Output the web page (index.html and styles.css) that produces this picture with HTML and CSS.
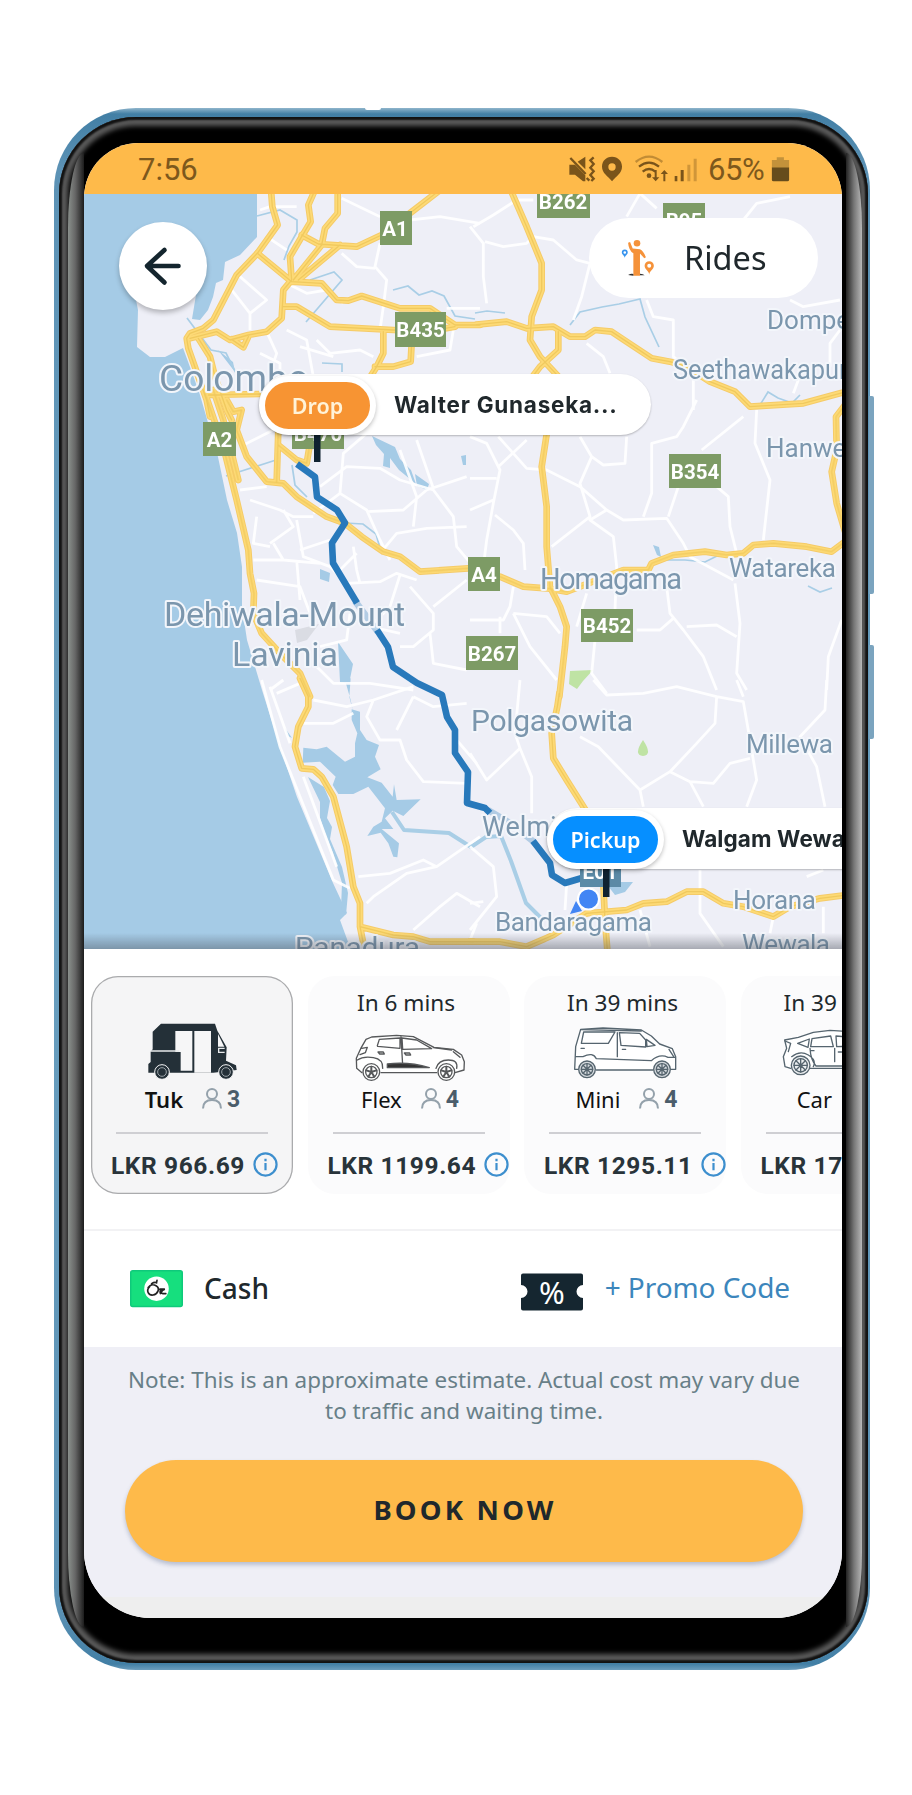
FILE: index.html
```html
<!DOCTYPE html>
<html lang="en">
<head>
<meta charset="utf-8">
<title>Rides</title>
<link rel="stylesheet" href="styles.css">
</head>
<body>
<div class="phone">
  <span class="side-key volume"></span>
  <span class="side-key power"></span>
  <span class="notch"></span>
  <div class="rim">
    <span class="shine shine-left"></span>
    <span class="shine shine-right"></span>
    <main class="screen">
      <header class="status">
        <span class="clock">7:56</span>
        <svg class="status-icons" viewBox="290 190 395 90">
          <g fill="#7a541a">
            <path d="M297 222H314L345 254V272H338L314 252H297zM322 213L345 198V236z"/>
            <path d="M425 198c-18 0-30 13-30 30 0 20 18 28 30 44 12-16 30-24 30-44 0-17-12-30-30-30zm0 20a11 11 0 1 1 0 22 11 11 0 0 1 0-22z" fill-rule="evenodd"/>
            <circle cx="536" cy="255" r="7"/>
            <path d="M553 238h6v22h8l-11 12-11-12h8zM579 272h6v-22h8l-11-12-11 12h8z"/>
            <path d="M613 256h8v16h-8zM631 238h9v34h-9z"/>
            <path d="M651 222h9v50h-9zM670 204h9v68h-9z" opacity=".35"/>
          </g>
          <g fill="none" stroke="#7a541a" stroke-width="7">
            <path d="M300 202L346 250"/>
            <path d="M370 200l-10 9 10 11-10 11 10 11-10 11 10 11-7 7M349 262l8 8"/>
            <path d="M506 228q30-24 60 0M517 243q19-16 38 0"/>
            <path d="M496 214q40-32 80 0" opacity=".45"/>
          </g>
        </svg>
        <span class="charge">65%</span>
        <svg class="battery" viewBox="900 195 60 80">
          <path d="M905 232v-25h15v-8h22v8h16v25z" fill="#c3923b"/>
          <path d="M905 230h53v38q0 5-5 5h-43q-5 0-5-5z" fill="#664c1c"/>
        </svg>
      </header>

      <section class="map">
        <svg class="map-canvas" viewBox="84 194 758 755">
          <defs>
            <g id="majors">
              <g transform="translate(40 90) scale(.33333)">
                <path d="M693 300L697 350 713 405 652 490 590 555 520 690 490 715 450 730 440 745 445 775 475 860 500 930 510 980"/>
                <path d="M450 745L530 725 570 750 625 735 680 725 725 685 730 600 755 570M575 748L610 772 625 740M652 490L755 575M825 300L805 345 812 395 785 440 750 500 755 570M893 300V370L855 415 845 465 760 570M785 435L835 462 950 470 1025 435 1200 300M900 465L775 570M755 575L845 580 890 630 925 632 965 618 1080 655 1170 655 1245 705 1320 705"/>
                <path d="M730 650L770 650 870 710 1060 720 1160 725 1245 710M1030 725V790L1010 830 985 870M1005 830L1060 830 1112 815 1115 760M475 745L510 800 525 860 560 960 575 990M505 915L660 912"/>
              </g>
              <g transform="translate(470 90) scale(.33333)">
                <path d="M20 704L110 695 170 715 250 710 300 740 345 740 375 720 425 725 470 755 545 805 600 815 650 830 720 875 795 905 840 950 1000 940 1110 910 1130 905"/>
                <path d="M122 300L170 410 215 520 215 600 185 680 180 750 210 800 275 870M265 725V780L210 830 180 870"/>
              </g>
              <g transform="translate(80 400) scale(.33333)">
                <path d="M375 -20L430 140 470 300 505 450 510 520 522 580 520 640 545 700 600 760 660 820 690 890M400 -30L430 60 475 240"/>
                <path d="M440 0L460 35 485 30 470 90 500 170 560 245 610 250 650 290 740 350 795 370 845 410 910 455 960 470 1020 515 1165 505M595 90L590 245M595 135L650 180 680 190 690 130"/>
              </g>
              <g transform="translate(470 400) scale(.33333)">
                <path d="M232 90L215 200 230 320 230 440 240 560 270 620 290 680 285 740 268 890"/>
                <path d="M90 530L160 560 230 565 290 575 460 510 535 510 545 490 610 465 705 455 770 465 820 460 850 435 910 430 1010 440 1085 455 1125 425M1125 15L1098 50 1100 150 1085 215 1100 310 1125 395"/>
              </g>
              <g transform="translate(80 680) scale(.33333)">
                <path d="M660 -5L685 50 685 80 655 140 645 200 665 265 700 268 725 290 760 350 800 500 820 620 840 670 840 740 850 790M840 740L940 765 1000 770 1050 785 1180 785"/>
              </g>
              <g transform="translate(470 680) scale(.33333)">
                <path d="M268 40L262 80 245 160 250 235 290 300 350 395M0 785L90 785 170 800 250 765 350 700 470 690 520 670 590 665 650 635 700 635 760 670 820 680 910 710 960 680 1050 655 1130 645M400 610L405 720 412 810"/>
              </g>
            </g>
          </defs>

          <rect x="84" y="193" width="758" height="757" fill="#eeeff7"/>
          <path class="water" d="M84 193H257V237L240 255 225 262 223 280 216 283 213 297 208 310 200 320 192 319 196 295 135 295 138 310 137 347 150 357 165 357 183 348 190 367 200 395 218 457 227 500 237 533 242 567V607L247 640 262 690 280 747 297 797 333 883 347 913 340 920 351 950H84Z"/>

          <!-- lakes and lagoons -->
          <g class="water">
            <path transform="translate(80 680) scale(.33333)" d="M815 88L840 95V150L860 180 897 195 885 230 902 268 862 292 905 308 938 350 942 313 950 360 1022 358 970 408 938 392 915 415 940 447 905 447 957 490 952 532 940 530 925 490 902 458 862 468 880 440 905 425 915 385 865 320 820 342 775 342 758 315 767 290 720 245 668 248 670 203 710 208 740 200 795 245 825 230V190L832 160 815 120ZM795 0L812 -5 808 50 818 90 812 60Z"/>
            <path d="M308 777l16 10 6 14-3 17 5 9-2 12 12 28 6 26-2 22-5-6 1-26-9-30-8-20-5-15 0-16zM338 642l15 22-4 20-9-2zM372 436l23 11 5 12 11 11 5 14-17-14-9-12 0 10-7-2 1-12-8-9zM415 474l14 10-2 6-10-4zM320 569l10 4-1 9-9-3zM218 350l15 12 2 10zM605 882h28l-8 10-10 3zM285 728l7 10-4-2zM461 456l5-1 0 10-3 0zM653 545l6 2 2 10-4-2z"/>
          </g>
          <g class="stream">
            <path d="M257 216l23-6 17 10 0 12-8 14-5 14M393 290l15-4 11 9 13-4 12 5 11 20 20 3M570 325l10-13 22-5 17-3 21-5 5 18 14 30M475 313l12-2 18 2M310 280l24-8 8 8-12 14-24 28M187 318l24 32 15 3 10 20M322 363l20 1 0 8M292 465l3 20 12 12M345 523l18 1 13 10 4 14M760 405l8-13 10 6 14 5 8-8M665 560l20 0 20 2 16-8M808 586l12 6 12-4M226 476l50-16"/>
          </g>
          <path class="river" d="M392 812l12 18 45 3 22 14 15-10 15-1 10 25 15 42 15 15"/>
          <path d="M570 671l23-1-10 11-6 8-8-5zM643 740q10 15 0 16-10-1 0-16z" fill="#bfe3a4"/>
          <path d="M295 630l24-6-12 16-10 3z" fill="#dadce3"/>

          <!-- minor roads -->
          <g class="minor">
            <g transform="translate(40 90) scale(.33333)">
              <path d="M660 360L690 350 770 350M905 325L1020 380M1110 390L1200 380 1320 400M1020 460L1005 530 1040 570 1030 650 1020 720M905 490L950 530 1005 535M1220 655H1320M600 560L680 630 630 670 575 600M630 665V720M680 440L740 480M740 580L800 610 860 600 910 640M740 720L800 750 820 860M830 750L870 790 960 780 1000 800M680 725L710 790 690 850M1130 800L1230 780 1240 720M780 770L880 800M660 790L720 820 720 880"/>
            </g>
            <g transform="translate(470 90) scale(.33333)">
              <path d="M10 410L70 375 140 330 190 330M0 410L40 460 40 560 50 640M45 455L100 470 170 460 190 440 250 450 320 510 360 520 335 620 310 690M470 380L510 310 560 355M820 390L860 340 960 320M350 760L400 800 420 850M530 630L550 680 610 690 610 800 670 850 670 960M960 630L1000 650 1110 630M1110 720L1080 760 1080 830M1000 830L970 910"/>
            </g>
            <g transform="translate(80 400) scale(.33333)">
              <path d="M480 140L580 90M860 100L790 160 780 280 700 340M720 260L800 200 900 205 960 240 1060 270 1120 350 1130 440 1180 500M780 280L860 330 900 420 930 480M860 335L970 330 1040 270 1160 230M900 460L950 400 1040 385 1160 380M960 150L1010 290 1000 380M1010 120L1060 265M480 270L560 260M510 300L600 330 640 350 700 350M530 350L520 430 570 440M610 330L640 380 570 430M580 430L610 480M650 360L670 470 750 500 800 550M660 450L750 420M520 480L610 480 720 490M820 440L830 510 840 550M830 460L780 510M530 540L660 560 690 640M650 480L660 600M800 550L900 545 950 520 1010 540M960 525L930 620 870 680 960 700M990 560L1060 640 1060 690 1000 740 960 740M1060 620L1160 540M1050 700L1060 790 1160 810M720 740L800 720 810 640M610 840L570 870M700 790L760 850 870 850 1000 870"/>
            </g>
            <g transform="translate(470 400) scale(.33333)">
              <path d="M0 110L50 130 90 210 70 310 50 420 40 500M0 235L80 235M85 110L170 205 230 210 330 260 410 330 460 360 590 355 640 430 660 470 790 540M170 120L85 200M0 330L70 300M75 345L130 390 160 430 165 510M330 110L365 170 330 250 360 350 245 440M365 170L400 195 465 190 470 110M410 330L360 360 430 410 440 500 435 630M680 0L640 80 620 110 545 130 545 280 520 350M820 50L695 150M625 260L595 350M860 30L855 130 900 240 880 420M740 260L775 290 780 380 800 460M590 560L600 640 640 690 700 770 740 870M650 680L740 675 800 710M795 550L810 670 800 820 830 870M500 690L570 690 610 655M350 580L320 680M375 720L365 820 410 880M0 660L100 660 120 620 130 560M130 640L180 740 260 840M130 640L230 650 270 700M90 700V650M1115 660L1075 770 1070 870"/>
            </g>
            <g transform="translate(80 680) scale(.33333)">
              <path d="M545 0L600 200 640 300 760 600 810 625M570 20L630 190M670 290L770 560M590 40L660 10M700 60L800 80 880 60 1000 20M670 130L760 130 820 100M880 60L860 110 900 180 960 180 980 240 1030 305 1160 310M1000 50L950 150M1000 50L1060 80 1160 70M835 590L930 580 1030 540 1070 560 980 580 880 650 860 670M1070 560L1200 470M1000 750L1080 680 1130 640 1200 680M1190 730L1170 780M1130 180L1190 250"/>
            </g>
            <g transform="translate(470 680) scale(.33333)">
              <path d="M0 220L50 300 150 205 185 290 185 400M150 0L135 160 150 205M370 0L410 45 520 40 620 20 740 50 820 65 840 180 860 300 830 380M740 50L735 130 680 190 600 275 510 330 385 200 330 170M510 330L520 380M600 275L660 305 700 380M660 305L730 310 780 250 840 235M800 0L820 50M1070 0L1065 90 990 170 1040 260 1065 380M0 500L70 560 80 650 0 750M290 610L285 690M690 570L690 700 760 800M1010 590L1060 570M910 710L900 760M1060 680L1060 760M510 690L540 800M0 670L40 665"/>
            </g>
          </g>

          <use href="#majors" class="major casing"/>
          <use href="#majors" class="major core"/>
          <use href="#majors" class="major center"/>

          <path class="route faded" d="M355 601L378 632M488 810L510 823 534 842"/>
          <path class="route" d="M297 464L315 477 317 497 337 510 345 523 332 543 333 563 357 603M377 630L388 647 393 667 417 683 442 695 447 717 455 730V753L468 772 467 803 485 808 490 813M533 841L550 863 552 875 565 883 582 878"/>

          <g class="place">
            <text x="159" y="391" font-size="36" textLength="150" lengthAdjust="spacingAndGlyphs">Colombo</text>
            <text x="164" y="626" font-size="34" textLength="241">Dehiwala-Mount</text>
            <text x="232" y="666" font-size="34" textLength="106">Lavinia</text>
            <text x="540" y="589" font-size="29" textLength="142">Homagama</text>
            <text x="729" y="577" font-size="26" textLength="107">Watareka</text>
            <text x="471" y="731" font-size="30" textLength="162">Polgasowita</text>
            <text x="746" y="753" font-size="26" textLength="87">Millewa</text>
            <text x="482" y="836" font-size="27">Welmilla</text>
            <text x="495" y="931" font-size="26" textLength="157">Bandaragama</text>
            <text x="733" y="909" font-size="26" textLength="83">Horana</text>
            <text x="742" y="953" font-size="26" textLength="88">Wewala</text>
            <text x="295" y="957" font-size="28" textLength="125" lengthAdjust="spacingAndGlyphs">Panadura</text>
            <text x="767" y="329" font-size="26">Dompe</text>
            <text x="673" y="379" font-size="27" textLength="188" lengthAdjust="spacingAndGlyphs">Seethawakapura</text>
            <text x="766" y="457" font-size="26">Hanwella</text>
          </g>

          <g class="shield">
            <path d="M380 211h32v34h-32zM537 187h53v31h-53zM663 203h42v34h-42zM395 312h51v35h-51zM203 422h33v34h-33zM292 414h52v35h-52zM669 454h52v34h-52zM468 557h32v34h-32zM581 609h52v33h-52zM466 636h52v34h-52z"/>
            <path d="M580 860h41v27h-41z" fill="#5b8aa6"/>
            <g class="shield-text">
              <text x="395" y="236">A1</text><text x="563" y="209">B262</text><text x="684" y="228">B95</text>
              <text x="420.500" y="337">B435</text><text x="219.500" y="447">A2</text><text x="318" y="441">B470</text>
              <text x="695" y="479">B354</text><text x="484" y="582">A4</text><text x="607" y="633">B452</text>
              <text x="492" y="661">B267</text><text x="600" y="879">E01</text>
            </g>
          </g>
          <path d="M576 901l-6 13 12-3z" fill="#4285f4"/>
          <circle cx="588.500" cy="899" r="10.500" fill="#4285f4" stroke="#fff" stroke-width="2"/>
          <path d="M314 434h6.500v28h-6.500zM603 866h6.500v31h-6.500z" fill="#0f2230"/>
        </svg>

        <button class="back" aria-label="Back">
          <svg viewBox="0 0 88 88"><path d="M59.500 44H28M45.500 28L28 44l17.500 16.500" fill="none" stroke="#14252e" stroke-width="4.600" stroke-linecap="round" stroke-linejoin="round"/></svg>
        </button>

        <div class="rides">
          <svg viewBox="450 445 105 115">
            <g fill="#f5923a"><circle cx="501" cy="458" r="10"/><path d="M474 456l6-2 8 20 22 2q10 4 18 24l-5 3-13-14v67h-20v-68q-14-8-16-32z"/>
            <path d="M538 512a14 14 0 0 0-14 14c0 12 14 16 14 27 0-11 14-15 14-27a14 14 0 0 0-14-14zm0 8a6 6 0 1 1 0 12 6 6 0 0 1 0-12z" fill-rule="evenodd"/></g>
            <path d="M464 477a9 9 0 0 0-9 9c0 7 9 9 9 17 0-8 9-10 9-17a9 9 0 0 0-9-9zm0 5a4 4 0 1 1 0 8 4 4 0 0 1 0-8z" fill="#3693ee" fill-rule="evenodd"/>
            <path d="M474 554q10-6 16-3v5zM510 550q10 0 14 5h-14z" fill="#333"/>
          </svg>
          <span>Rides</span>
        </div>

        <div class="stop stop-drop"><b class="badge badge-drop">Drop</b><span class="stop-name">Walter Gunaseka...</span></div>
        <div class="stop stop-pickup"><b class="badge badge-pickup">Pickup</b><span class="stop-name">Walgam Wewa</span></div>
        <span class="map-fade"></span>
      </section>

      <svg width="0" height="0" class="symbols">
        <symbol id="person" viewBox="0 0 20 21"><circle cx="10" cy="6" r="5"/><path d="M1 20.500q0-8.500 9-8.500t9 8.500"/></symbol>
        <symbol id="info" viewBox="0 0 26 26"><circle cx="13" cy="13" r="11.500"/><path d="M13 11.500v7.500M13 7v2.500"/></symbol>
      </svg>

      <section class="vehicles">
        <article class="card selected">
          <span class="eta"></span>
          <svg class="vehicle" viewBox="156 180 360 186">
            <path d="M243 191H405L412 212 440 262 438 302 468 316 470 330 400 338H205V312L212 306V275L218 268V215Z" fill="#243038"/>
            <path d="M286 213H337V332H302V276H286zM343 213H393V338H343z" fill="#f6f6f7"/>
            <path d="M414 222L433 260H414z" fill="#f6f6f7"/>
            <path d="M212 273h86M434 265h-18v12h18" fill="none" stroke="#e8eaec" stroke-width="4"/>
            <g fill="#243038" stroke="#f6f6f7" stroke-width="3"><circle cx="246" cy="336" r="22"/><circle cx="438" cy="336" r="22"/></g>
            <g fill="#243038" stroke="#9da5aa" stroke-width="3"><circle cx="246" cy="336" r="13"/><circle cx="438" cy="336" r="13"/></g>
          </svg>
          <div class="kind"><span>Tuk</span><svg class="person"><use href="#person"/></svg><b>3</b></div>
          <hr>
          <div class="fare"><b>LKR 966.69</b><svg class="info"><use href="#info"/></svg></div>
        </article>

        <article class="card">
          <span class="eta">In 6 mins</span>
          <svg class="vehicle" viewBox="807 180 360 186">
            <g class="outline" stroke="#56585a">
              <path d="M846 338L830 325 829 295 842 266 858 238 875 231 950 226 1000 230 1062 262 1120 268 1145 285 1153 305 1152 330 1125 338M903 338H1070" fill="#fff"/>
              <path d="M892 257L898 238 960 234V265L893 259zM966 234L1010 240 1055 266 968 268zM963 230L968 315M845 265L862 262 856 278 840 284M1120 275L1140 292M1060 263L1115 270M832 300Q850 288 880 293T908 325M1068 325Q1075 300 1105 300T1130 325M894 276h16l3 6h-14zM973 279h16l3 6h-14z"/>
              <path d="M922 312Q985 304 1048 323H922z" fill="#333"/>
              <circle cx="874" cy="336" r="25" fill="#fff"/><circle cx="1099" cy="336" r="25" fill="#fff"/>
              <circle cx="874" cy="336" r="17"/><circle cx="1099" cy="336" r="17"/>
              <path d="M874 336V320M874 336L859 331M874 336L865 350M874 336L883 350M874 336L889 331M1099 336V320M1099 336L1084 331M1099 336L1090 350M1099 336L1108 350M1099 336L1114 331" stroke-width="6"/>
            </g>
          </svg>
          <div class="kind"><span>Flex</span><svg class="person"><use href="#person"/></svg><b>4</b></div>
          <hr>
          <div class="fare"><b>LKR 1199.64</b><svg class="info"><use href="#info"/></svg></div>
        </article>

        <article class="card">
          <span class="eta">In 39 mins</span>
          <svg class="vehicle" viewBox="286 180 360 186">
            <g class="outline" stroke="#56656f">
              <path d="M325 328H315L318 260 333 208 400 204 515 210 545 228 570 252 608 266 618 290V328H600M380 330H550" fill="#fff"/>
              <path d="M333 209L515 213M342 216H436L416 250H335zM449 218L510 220 528 240V261L454 256zM443 218V290M530 238L556 256 532 260zM598 268L612 290M318 290H340Q370 275 380 296L545 302Q570 280 595 292L617 292M334 265h10M458 268h10"/>
              <circle cx="352" cy="328" r="25" fill="#d4d9dd"/><circle cx="577" cy="328" r="25" fill="#d4d9dd"/>
              <circle cx="352" cy="328" r="17"/><circle cx="577" cy="328" r="17"/>
              <path d="M352 311V345M335 328H369M340 316L364 340M340 340L364 316M577 311V345M560 328H594M565 316L589 340M565 340L589 316"/>
            </g>
          </svg>
          <div class="kind"><span>Mini</span><svg class="person"><use href="#person"/></svg><b>4</b></div>
          <hr>
          <div class="fare"><b>LKR 1295.11</b><svg class="info"><use href="#info"/></svg></div>
        </article>

        <article class="card">
          <span class="eta">In 39 mins</span>
          <svg class="vehicle" viewBox="936 180 360 186">
            <g class="outline" stroke="#56656f">
              <path d="M962 325L945 320 940 290 950 265 944 240 985 232 1030 217 1080 211 1150 216 1220 250 1270 265 1285 290 1280 325H1020" fill="#fff"/>
              <path d="M983 250L1018 237 1014 262zM1026 236L1082 228 1090 260H1022zM1098 228L1150 232 1180 258 1100 260zM1094 265V305M1020 265Q1022 300 1038 318H1120M965 290Q990 270 1015 285T1030 320M945 243L962 250 955 275M1022 272h10M1105 276h10"/>
              <circle cx="992" cy="316" r="28" fill="#eceff1"/><circle cx="992" cy="316" r="20"/><path d="M992 296V336M972 316H1012M978 302L1006 330M978 330L1006 302"/>
              <circle cx="1225" cy="316" r="28" fill="#eceff1"/>
            </g>
          </svg>
          <div class="kind"><span>Car</span><svg class="person"><use href="#person"/></svg><b>4</b></div>
          <hr>
          <div class="fare"><b>LKR 1795.20</b><svg class="info"><use href="#info"/></svg></div>
        </article>
      </section>

      <section class="payment">
        <svg class="cash-icon" viewBox="0 0 54 38">
          <rect x=".75" y=".75" width="52.500" height="36.500" rx="2" fill="#16df7e" stroke="#0fc97b" stroke-width="1.500"/>
          <circle cx="27" cy="19" r="12.500" fill="#fff"/>
          <path d="M20 17q-3 3-1.500 6t5 2.500 5-4-2-5.500-6 0l-2 2M22 14q3-2 5-1l.5-2.500M30.500 19.500h5q-3 1-3.500 3t4.500 1.500M31 24q-1-3 1-4.500" fill="none" stroke="#222" stroke-width="1.700" stroke-linecap="round"/>
        </svg>
        <span class="method">Cash</span>
        <svg class="ticket" viewBox="0 0 62 38">
          <path d="M2 .5h58q2 0 2 2V12a6.500 6.500 0 0 0 0 13v10.500q0 2-2 2H2q-2 0-2-2V25a6.500 6.500 0 0 0 0-13V2.500q0-2 2-2z" fill="#152630"/>
          <text x="31" y="31">%</text>
        </svg>
        <span class="promo">+ Promo Code</span>
      </section>

      <footer class="checkout">
        <p class="note">Note: This is an approximate estimate. Actual cost may vary due<br>to traffic and waiting time.</p>
        <button class="book">BOOK NOW</button>
      </footer>
    </main>
  </div>
</div>
</body>
</html>
```
FILE: styles.css
```css
* { box-sizing: border-box; }
body { margin: 0; padding: 108px 0 0 54px; height: 1795px; overflow: hidden; background: #fff; font-family: "Noto Sans", "Open Sans", sans-serif; color: #20282c; }
button { border: 0; padding: 0; font: inherit; color: inherit; }
svg { display: block; }

.phone { position: relative; width: 816px; height: 1562px; padding: 9px 2px 7px 5px; border-radius: 82px; background: linear-gradient(180deg, #8fb5cc 0, #427fa5 6px, #5c92b5 60px, #6a9fbf 50%, #5c92b5 1500px, #427fa5 1556px, #6c9dbd 100%); }
.side-key { position: absolute; left: 815px; width: 5px; background: #7ba4bf; border-radius: 0 2px 2px 0; }
.volume { top: 288px; height: 198px; }
.power { top: 537px; height: 94px; }
.notch { position: absolute; left: 311px; top: 0; width: 16px; height: 2px; background: #fff; border-radius: 0 0 8px 8px; }
.rim { position: relative; width: 809px; height: 1546px; padding: 26px 26px 45px 25px; border-radius: 77px; background: #000; box-shadow: inset 0 0 2px 3px #111, inset 0 0 5px 9px #5c5c5c; }
.shine { position: absolute; top: 36px; bottom: 36px; width: 16px; }
.shine-left { left: 9px; background: linear-gradient(90deg, #8a908c, #666 45%, #1c1c1c); border-radius: 16px 0 0 16px / 75px 0 0 75px; }
.shine-right { right: 6px; background: linear-gradient(90deg, #222, #777 50%, #b8b8b8); border-radius: 0 16px 16px 0 / 0 75px 75px 0; }
.screen { position: relative; width: 758px; height: 1475px; overflow: hidden; border-radius: 55px 55px 67px 67px; background: #fff; }

.status { display: flex; align-items: center; height: 51px; padding: 0 52px 0 54px; background: #feba4a; font-family: Roboto, sans-serif; font-size: 31px; color: #7d581c; }
.clock { flex: 1; padding-top: 2px; }
.status-icons { width: 131.7px; height: 30px; margin-right: 9px; }
.charge { padding-top: 2px; width: 62px; letter-spacing: -.4px; }
.battery { width: 20px; height: 26px; }

.map { position: relative; height: 755px; overflow: hidden; }
.map-canvas { width: 758px; height: 755px; }
.water { fill: #a5cbe6; }
.stream { fill: none; stroke: #a9cee6; stroke-width: 1.7; }
.river { fill: none; stroke: #a9cee6; stroke-width: 4; stroke-linejoin: round; }
.minor { fill: none; stroke: #fff; stroke-width: 8.5; stroke-linejoin: round; opacity: .9; }
.major { fill: none; stroke-linejoin: round; stroke-linecap: round; }
.casing { stroke: #f5cb68; stroke-width: 20; }
.core { stroke: #fdda76; stroke-width: 14; }
.center { stroke: #f0c95e; stroke-width: 4; }
.route { fill: none; stroke: #2879bb; stroke-width: 6.6; stroke-linejoin: round; }
.faded { opacity: .3; }
.place { font-family: Roboto, sans-serif; fill: #7b96ad; stroke: #f3f6fb; stroke-width: 4; stroke-linejoin: round; paint-order: stroke; }
.shield { fill: #7d9b65; }
.shield-text { fill: #fff; font: 700 20.5px Roboto, sans-serif; text-anchor: middle; }
.map-fade { position: absolute; left: 0; right: 0; bottom: 0; height: 16px; background: linear-gradient(rgba(70,75,85,0), rgba(70,75,85,.42)); }

.back { position: absolute; left: 35px; top: 28px; width: 88px; height: 88px; border-radius: 50%; background: #fff; box-shadow: 0 3px 5px rgba(0,0,0,.25); }
.rides { position: absolute; left: 505px; top: 24px; display: flex; align-items: center; width: 229px; height: 80px; padding-left: 31px; border-radius: 40px; background: #fff; font-size: 32.5px; }
.rides svg { width: 35px; height: 38px; margin-right: 29px; }
.rides span { padding-bottom: 1px; }
.stop { position: absolute; display: flex; align-items: center; height: 61px; border-radius: 31px; background: #fff; box-shadow: 0 1px 2px rgba(0,0,0,.25); }
.stop-drop { left: 175px; top: 180px; width: 392px; }
.stop-pickup { left: 463px; top: 614px; width: 420px; }
.badge { display: flex; align-items: center; justify-content: center; width: 117px; height: 59px; margin-top: 2px; border: 6px solid #fff; border-radius: 30px; color: #fff; font-size: 21.5px; font-weight: 600; box-shadow: 0 2px 4px rgba(0,0,0,.25); }
.badge-drop { background: #f79433; color: #fff3d8; }
.badge-pickup { background: #068fff; }
.stop-name { margin-left: 18px; padding-bottom: 1px; font-family: Inter, sans-serif; font-size: 22.5px; font-weight: 700; letter-spacing: .75px; white-space: nowrap; }
.stop-pickup .stop-name { letter-spacing: .1px; }

.symbols { position: absolute; }
.vehicles { display: flex; gap: 14.5px; height: 282px; padding: 27px 0 0 7px; border-bottom: 2px solid #f2f2f4; }
.card { flex: 0 0 202px; height: 218px; padding-top: 12px; border-radius: 27px; background: #fbfbfc; }
.selected { background: #f5f5f6; box-shadow: inset 0 0 0 1.3px #aaabad; }
.eta { display: block; height: 32px; padding-right: 5px; font-size: 22.6px; line-height: 30px; text-align: center; }
.vehicle { width: 120px; height: 62px; margin: 0 auto; }
.outline { fill: none; stroke-width: 4; stroke-linejoin: round; stroke-linecap: round; }
.kind { display: flex; align-items: center; justify-content: center; height: 30px; margin: 2px 0 0 3px; font-size: 22px; line-height: 30px; color: #111; }
.selected .kind { margin-left: 1px; }
.selected .kind span { font-weight: 600; }
.person { width: 20px; height: 21px; margin: -2px 5px 0 19px; fill: none; stroke: #94a1ab; stroke-width: 2; }
.kind b { padding-top: 2px; color: #4b5d6b; font-family: Roboto, sans-serif; font-size: 23px; }
.card hr { width: 152px; height: 1.5px; margin: 18px 0 0 25px; border: 0; background: #cfcfd3; }
.fare { display: flex; align-items: center; height: 28px; margin: 18px 0 0 20px; font-family: Roboto, sans-serif; font-size: 24.5px; color: #29343a; white-space: nowrap; }
.fare b { font-weight: 700; letter-spacing: .6px; }
.info { flex: none; width: 25px; height: 25px; margin: 0 0 2px 8px; fill: none; stroke: #3d8fce; stroke-width: 2.3; }

.payment { display: flex; align-items: center; height: 116px; padding: 0 52px 0 46px; font-size: 28px; }
.cash-icon { width: 53px; height: 37.3px; }
.method { flex: 1; margin-left: 21px; padding-bottom: 3px; font-weight: 500; }
.ticket { width: 62px; height: 38px; margin: 6px 22px 0 0; }
.ticket text { fill: #fff; font-size: 31px; text-anchor: middle; }
.promo { padding-bottom: 4px; color: #3c86bc; letter-spacing: -.08px; }

.checkout { height: 271px; padding: 18px 39px 0 41px; background: linear-gradient(#efeff6 250px, #eee 250px); }
.note { margin: 0 -20px; font-size: 22.45px; line-height: 30.5px; color: #687f88; text-align: center; white-space: nowrap; }
.book { display: block; width: 678px; height: 102px; margin-top: 34px; padding: 0 0 4px 2px; border-radius: 51px; background: #feba4a; box-shadow: 0 3px 4px rgba(60,80,120,.3); font-size: 27.5px; font-weight: 700; letter-spacing: 3.2px; }
```
